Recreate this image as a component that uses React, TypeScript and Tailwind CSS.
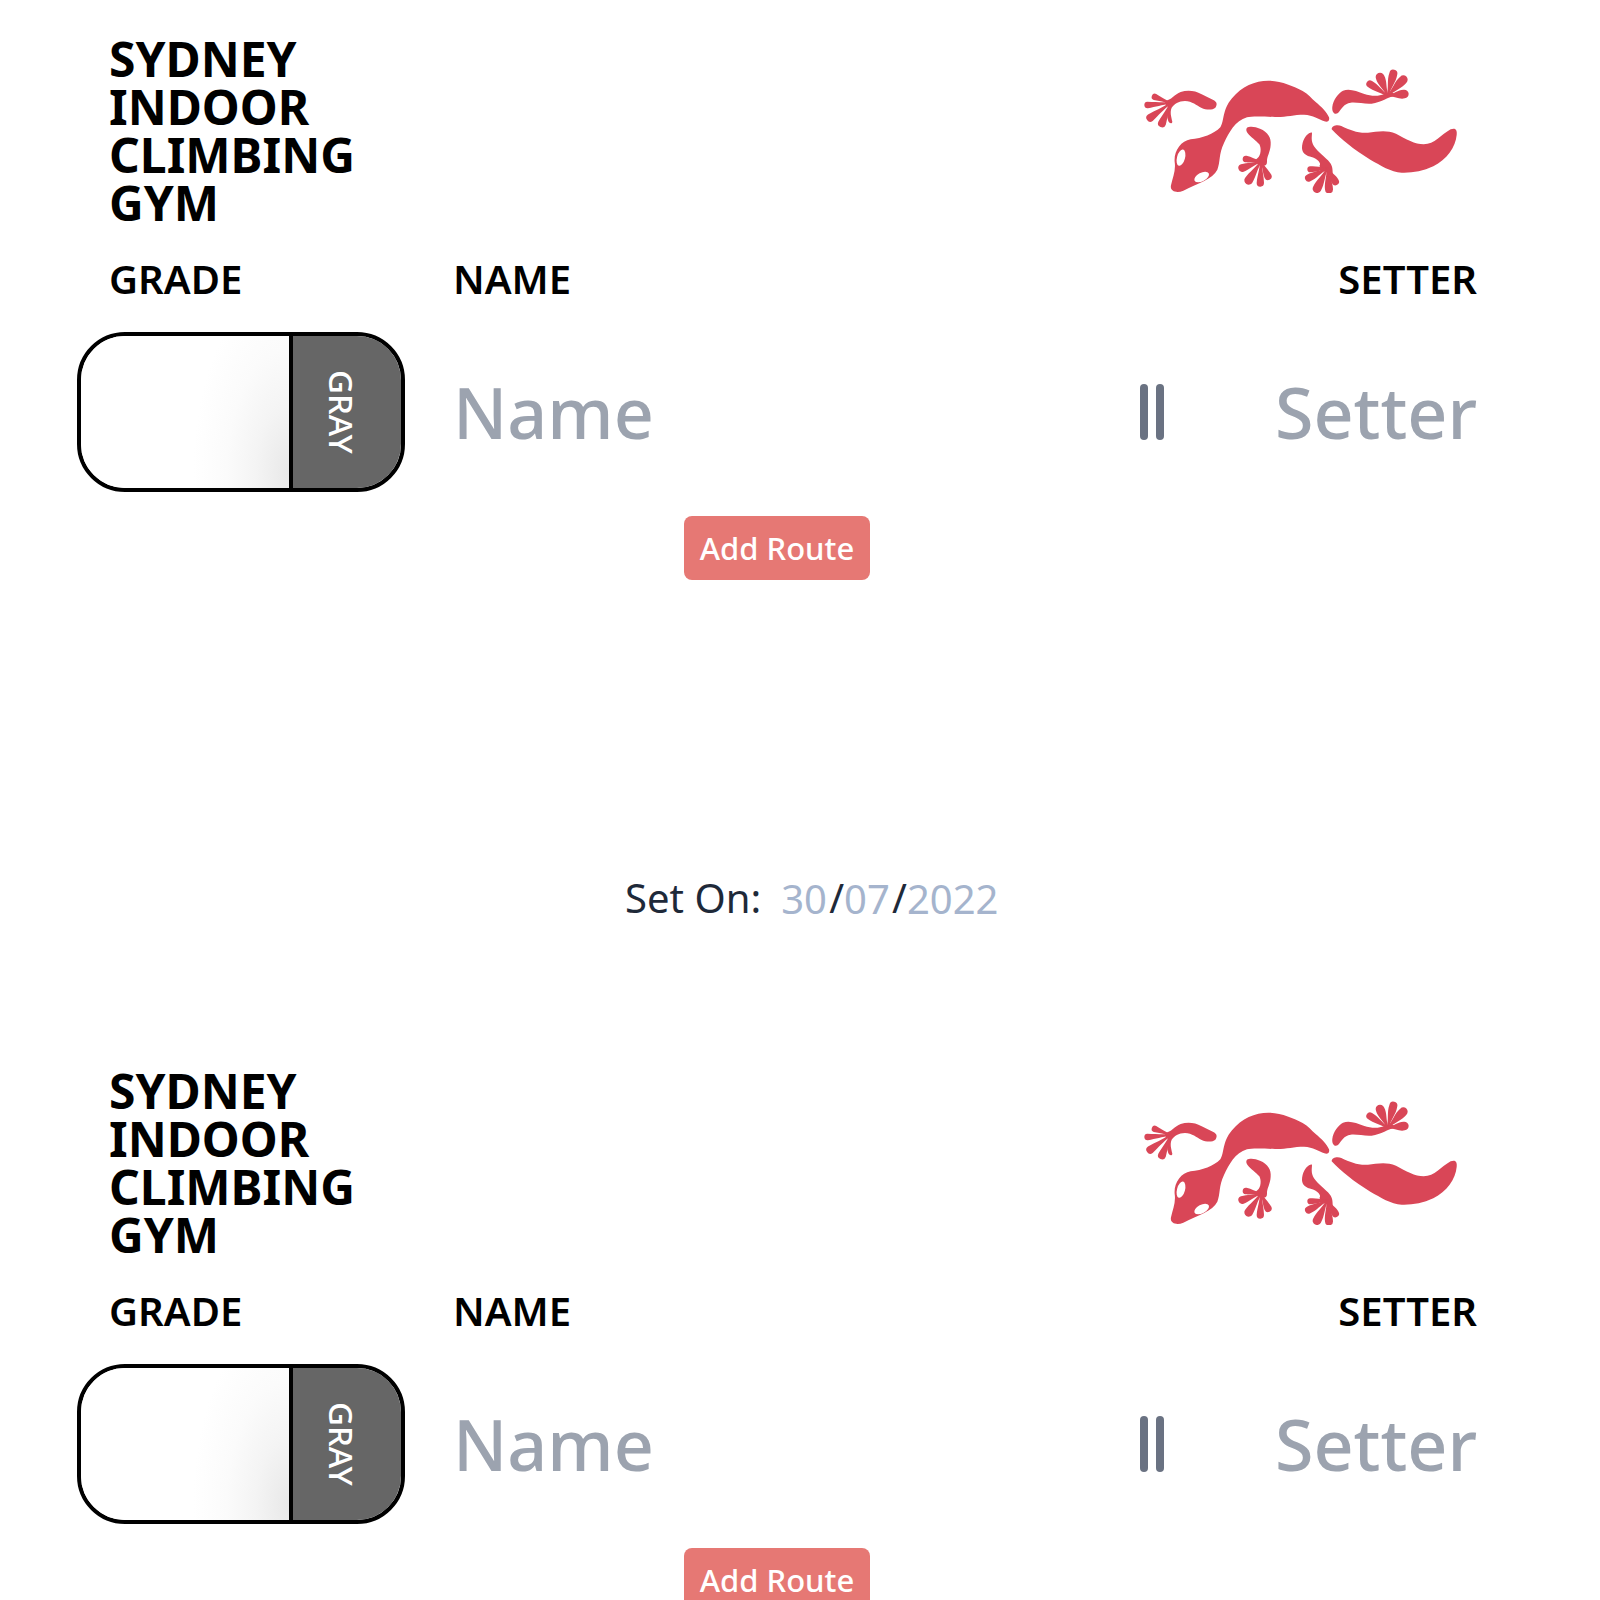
type Digit = [x: number, y: number, r: number];

/* Teardrop toe: a thin neck at the palm that swells into the rounded tip. */
function toe(px: number, py: number, [tx, ty, r]: Digit, full: number) {
  const dx = tx - px;
  const dy = ty - py;
  const len = Math.hypot(dx, dy);
  const nx = -dy / len;
  const ny = dx / len;
  const at = (t: number, off: number) => `${px + dx * t + nx * off} ${py + dy * t + ny * off}`;
  const b = r * full;
  return `M${at(0, 3)} C${at(0.4, 3)} ${at(0.65, b)} ${at(1, r)} A${r} ${r} 0 0 0 ${at(1, -r)} C${at(0.65, -b)} ${at(0.4, -3)} ${at(0, -3)}Z`;
}

const feet: { palm: [number, number]; full: number; digits: Digit[] }[] = [
  { palm: [122, 130], full: 0.75, digits: [[75, 112, 10], [53, 136, 10], [61, 174, 12], [96, 191, 12]] },
  { palm: [393, 305], full: 0.9, digits: [[348, 298, 10], [337, 325, 12], [356, 362, 13], [391, 370, 11], [414, 350, 11]] },
  { palm: [773, 108], full: 1.2, digits: [[720, 73, 11], [750, 52, 13], [790, 42, 12], [820, 60, 13], [823, 103, 13]] },
  { palm: [592, 326], full: 1.1, digits: [[541, 329, 9], [536, 355, 11], [561, 387, 13], [597, 389, 12], [616, 366, 11]] },
];

function Gecko() {
  return (
    <svg viewBox="42 28 942 372" className="h-[124px] w-[314px] shrink-0 fill-[#d94657]" role="img" aria-label="Gecko logo">
      <path d="M104 124C124 122 134 103 152 97C172 91 194 92 215 104L250 121C262 127 262 136 256 144C248 152 228 151 215 145C199 137 187 125 165 124C146 124 132 134 125 144C119 158 124 171 127 186C126 193 119 192 115 185C109 170 110 157 117 143L108 137Z" />
      <path d="M123 377C128 353 138 333 134 307C131 275 152 244 182 239C216 236 252 223 271 203C284 182 276 151 306 116C335 80 375 63 415 63C455 63 490 80 518 94C535 104 544 116 557 127C574 141 591 158 597 173C600 184 592 189 583 185C566 179 550 166 522 165C490 165 468 173 435 172C405 171 365 169 351 173C315 184 298 217 282 250C266 283 271 308 262 330C248 359 205 369 160 393C139 402 119 394 123 377Z" />
      <path d="M351 204C358 199 376 200 390 207C414 217 424 234 422 255C421 277 410 291 411 306C411 316 405 320 400 316L382 312C376 306 374 302 382 296C394 287 394 264 388 254C378 241 363 234 352 219C348 213 348 208 351 204Z" />
      <path d="M607 141C609 120 626 100 639 93C658 85 679 94 703 103C722 109 745 111 763 103L782 98L805 107C770 112 755 129 725 132C704 134 682 127 662 129C641 132 635 147 624 160C613 168 605 155 607 141Z" />
      <path d="M605 209C605 196 624 195 634 199C661 212 684 221 714 219C740 216 768 209 798 222C828 239 855 253 881 254C914 254 933 225 962 209C977 203 982 211 980 226C977 262 950 300 910 320C878 335 846 340 815 339C782 337 752 317 721 300C671 270 633 238 605 209Z" />
      <path d="M546 219C537 217 524 230 518 249C512 272 519 285 542 291C562 296 576 311 568 319L580 333L608 344C608 330 608 320 600 309C587 293 565 279 552 260C542 242 546 231 546 219Z" />
      {feet.map(({ palm, full, digits }) =>
        digits.map((d) => <path key={`${d[0]}-${d[1]}`} d={toe(palm[0], palm[1], d, full)} />),
      )}
      <ellipse cx="153" cy="294" rx="12" ry="25" transform="rotate(15 153 294)" fill="white" />
      <ellipse cx="215" cy="352" rx="24" ry="13" transform="rotate(-28 215 352)" fill="white" />
    </svg>
  );
}

function DatePart({ label, hint, wide }: { label: string; hint: string; wide?: boolean }) {
  return (
    <input
      aria-label={label}
      placeholder={hint}
      className={`${wide ? "w-24" : "w-12"} bg-transparent p-0 outline-none placeholder:text-[#a5b4cd] placeholder:opacity-100`}
    />
  );
}

function RouteCard({ id }: { id: string }) {
  return (
    <section className="flex flex-col pb-[114px] pt-[35px]">
      <div className="flex flex-col pl-[77px] pr-[123px]">
        <header className="flex items-start justify-between pl-8 pr-[19px]">
          <h1 className="text-[48px] font-bold leading-12 text-black">
            SYDNEY
            <br />
            INDOOR
            <br />
            CLIMBING
            <br />
            GYM
          </h1>
          <div className="pt-[34px]">
            <Gecko />
          </div>
        </header>

        <div className="mt-8 grid grid-cols-[328px_1fr_24px_265px] items-center gap-x-12 gap-y-[33px]">
          <label htmlFor={`grade-${id}`} className="pl-8 text-[40px] font-semibold leading-10 text-black">
            GRADE
          </label>
          <label htmlFor={`name-${id}`} className="text-[40px] font-semibold leading-10 text-black">
            NAME
          </label>
          <span />
          <label htmlFor={`setter-${id}`} className="text-right text-[40px] font-semibold leading-10 text-black">
            SETTER
          </label>

          <div className="flex h-40 overflow-hidden rounded-[48px] border-4 border-black">
            <input
              id={`grade-${id}`}
              className="min-w-0 flex-1 bg-[radial-gradient(96px_190px_at_100%_90%,#e8e8e8_0%,#f4f4f4_35%,#fbfbfb_65%,#ffffff_100%)] px-6 text-[70px] outline-none"
            />
            <button
              type="button"
              className="flex w-28 items-center justify-center border-l-4 border-black bg-[#666666] pr-3 text-[33px] font-medium leading-8 text-white [writing-mode:vertical-rl]"
            >
              GRAY
            </button>
          </div>
          <input
            id={`name-${id}`}
            placeholder="Name"
            className="w-full min-w-0 bg-transparent text-[70px] font-medium leading-20 outline-none placeholder:text-[#9ca3af] placeholder:opacity-100"
          />
          <button type="button" aria-label="Reorder route" className="flex h-14 justify-between">
            <span className="h-14 w-2 rounded-full bg-gray-500" />
            <span className="h-14 w-2 rounded-full bg-gray-500" />
          </button>
          <input
            id={`setter-${id}`}
            placeholder="Setter"
            className="w-full min-w-0 bg-transparent text-right text-[70px] font-medium leading-20 outline-none placeholder:text-[#9ca3af] placeholder:opacity-100"
          />
        </div>

        <button
          type="button"
          className="mt-6 h-16 self-center rounded-lg bg-[#e67874] px-4 text-[31px] font-medium leading-8 text-white"
        >
          Add Route
        </button>
      </div>

      <footer className="mt-[298px] flex h-10 items-center justify-center pl-7 text-[40px] leading-10 text-gray-800">
        <span className="mr-5">Set On:</span>
        <DatePart label="Day" hint="30" />
        <span>/</span>
        <DatePart label="Month" hint="07" />
        <span>/</span>
        <DatePart label="Year" hint="2022" wide />
      </footer>
    </section>
  );
}

export default function App() {
  return (
    <main className="h-screen overflow-hidden bg-white font-['Noto_Sans',sans-serif]">
      <RouteCard id="first" />
      <RouteCard id="second" />
    </main>
  );
}
